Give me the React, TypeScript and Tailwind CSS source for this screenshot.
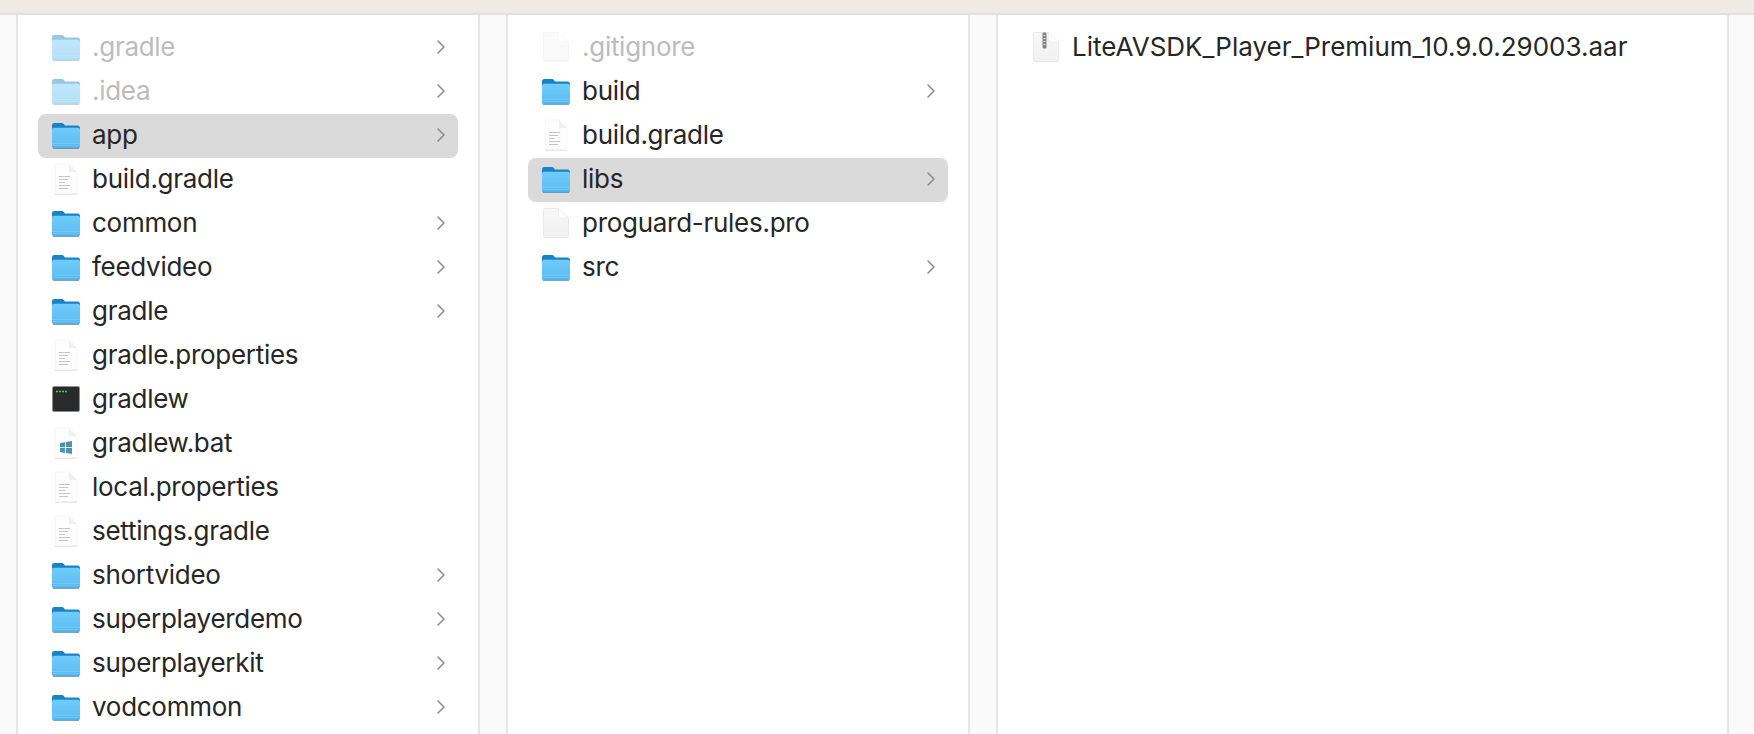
import { ChevronRight } from "lucide-react";

type Kind = "folder" | "doc" | "blank" | "term" | "bat" | "zip";
type Item = { name: string; kind: Kind; dim?: boolean; selected?: boolean };

const FolderIcon = () => (
  <svg width="30" height="28" viewBox="0 0 30 28" className="block">
    <defs>
      <linearGradient id="folderBody" x1="0" y1="0" x2="0" y2="1">
        <stop offset="0" stopColor="#6fcbf9" />
        <stop offset="0.75" stopColor="#60c0f5" />
        <stop offset="1" stopColor="#4fafe8" />
      </linearGradient>
    </defs>
    <path d="M1 4.5C1 2.8 2 2 3.4 2h7.2c1.1 0 1.7.5 2.4 1.3L14 4.6h12.6C28 4.6 29 5.5 29 7v4H1z" fill="#1a83c8" />
    <path d="M1 8.800c0-1.200.9-2 2-2h24c1.100 0 2 .8 2 2v16.400c0 1.300-.9 2.100-2.100 2.100H3.100c-1.200 0-2.100-.8-2.100-2.100z" fill="url(#folderBody)" />
    <path d="M1 22.400h28M1 24.600h28" stroke="#8fd5f8" strokeWidth="0.6" opacity="0.8" />
    <path d="M2 27.500h26" stroke="#2f6f99" strokeWidth="0.8" opacity="0.7" />
  </svg>
);

// plain white page used by the text and script documents
const DocSheet = ({ children }: { children?: React.ReactNode }) => (
  <svg width="30" height="32" viewBox="0 0 30 32" className="block">
    <path d="M4.500 1H18l8 8v22H4.500z" fill="#fefefe" stroke="#f3f3f3" strokeWidth="0.7" />
    <path d="M18 1v7c0 .6.4 1 1 1h7z" fill="#f0f0f0" />
    <path d="M4 31.200h22" stroke="#dcdcdc" strokeWidth="0.8" />
    {children}
  </svg>
);

// greyer page with a soft edge, for files with no preview
const GreySheet = ({ children }: { children?: React.ReactNode }) => (
  <svg width="30" height="32" viewBox="0 0 30 32" className="block">
    <defs>
      <linearGradient id="greySheet" x1="0" y1="0" x2="0" y2="1">
        <stop offset="0" stopColor="#f7f7f7" />
        <stop offset="1" stopColor="#f1f1f1" />
      </linearGradient>
    </defs>
    <path d="M2.500 3C2.500 2 3.300 1.500 4 1.500h13.500l10 9.500v18c0 1-.7 1.500-1.500 1.500H4c-.8 0-1.500-.5-1.500-1.500z" fill="url(#greySheet)" stroke="#e2e2e2" strokeWidth="0.7" />
    <path d="M17.500 1.500v8c0 .9.600 1.500 1.500 1.500h8.500z" fill="#ffffff" stroke="#e6e6e6" strokeWidth="0.5" />
    {children}
  </svg>
);

const FileIcon = ({ kind }: { kind: Kind }) => {
  if (kind === "folder") return <FolderIcon />;
  if (kind === "doc")
    return (
      <DocSheet>
        <path d="M8 13.500h11M8 16.500h9M8 19.500h6M8 22.500h11M8 25.500h9" stroke="#c4c4c4" strokeWidth="1.100" />
      </DocSheet>
    );
  if (kind === "bat")
    return (
      <DocSheet>
        <path d="M9 17l5-.8v5l-5-.1zM15 16l6-1v6.200l-6-.1zM9 21.800l5 .1v5l-5-.8zM15 22l6 .1v6l-6-1z" fill="#4b93b5" transform="translate(0 -1)" />
      </DocSheet>
    );
  if (kind === "zip")
    return (
      <GreySheet>
        <rect x="11.500" y="1.500" width="4" height="16" rx="1" fill="#858585" />
        <path d="M12.500 4.500h2M12.500 7.500h2M12.500 10.500h2M12.500 13.500h2" stroke="#e8e8e8" strokeWidth="0.9" />
      </GreySheet>
    );
  if (kind === "term")
    return (
      <svg width="30" height="28" viewBox="0 0 30 28" className="block">
        <rect x="1.500" y="1.500" width="27" height="25" rx="1.500" fill="#2a2a2a" stroke="#8a9297" strokeWidth="1" />
        <path d="M5 6.500h2M8 6.500h2M11 6.500h2M14 6.500h2" stroke="#4fc463" strokeWidth="1.600" />
      </svg>
    );
  return <GreySheet />;
};

const Row = ({ item }: { item: Item }) => (
  <div
    className={`flex h-11 items-center rounded-lg pb-[2px] pl-[13px] pr-[5px] ${item.selected ? "bg-[#dadada]" : ""}`}
  >
    <span className={`flex w-[30px] shrink-0 items-center justify-center ${item.dim ? "opacity-45" : ""}`}>
      <FileIcon kind={item.kind} />
    </span>
    <span
      className={`ml-[11px] flex-1 whitespace-nowrap text-[26px] leading-none ${item.kind === "zip" ? "" : "tracking-[-0.28px]"} ${item.dim ? "text-[#bcbcbc]" : "text-[#262626]"}`}
    >
      {item.name}
    </span>
    {item.kind === "folder" && (
      <ChevronRight className="h-6 w-6 text-[#8a8a8a]" strokeWidth={1.5} />
    )}
  </div>
);

const Column = ({ items, className }: { items: Item[]; className: string }) => (
  <div className={`border-r-2 border-[#e6e6e6] bg-white px-5 pt-[11px] ${className}`}>
    {items.map((item) => (
      <Row key={item.name} item={item} />
    ))}
  </div>
);

const first: Item[] = [
  { name: ".gradle", kind: "folder", dim: true },
  { name: ".idea", kind: "folder", dim: true },
  { name: "app", kind: "folder", selected: true },
  { name: "build.gradle", kind: "doc" },
  { name: "common", kind: "folder" },
  { name: "feedvideo", kind: "folder" },
  { name: "gradle", kind: "folder" },
  { name: "gradle.properties", kind: "doc" },
  { name: "gradlew", kind: "term" },
  { name: "gradlew.bat", kind: "bat" },
  { name: "local.properties", kind: "doc" },
  { name: "settings.gradle", kind: "doc" },
  { name: "shortvideo", kind: "folder" },
  { name: "superplayerdemo", kind: "folder" },
  { name: "superplayerkit", kind: "folder" },
  { name: "vodcommon", kind: "folder" },
];

const second: Item[] = [
  { name: ".gitignore", kind: "blank", dim: true },
  { name: "build", kind: "folder" },
  { name: "build.gradle", kind: "doc" },
  { name: "libs", kind: "folder", selected: true },
  { name: "proguard-rules.pro", kind: "blank" },
  { name: "src", kind: "folder" },
];

const third: Item[] = [{ name: "LiteAVSDK_Player_Premium_10.9.0.29003.aar", kind: "zip" }];

export default function App() {
  return (
    <div className="flex h-[734px] flex-col overflow-hidden bg-[#fafafa] font-['Inter',sans-serif]">
      <div className="h-[15px] shrink-0 border-b-2 border-[#e3dfdc] bg-[#efeae6]" />
      <div className="flex min-h-0 flex-1 items-stretch">
        <div className="w-[18px] shrink-0 border-r-2 border-[#e6e6e6]" />
        <Column items={first} className="w-[462px] shrink-0" />
        <div className="w-[28px] shrink-0 border-r-2 border-[#e6e6e6]" />
        <Column items={second} className="w-[462px] shrink-0" />
        <div className="w-[28px] shrink-0 border-r-2 border-[#e6e6e6]" />
        <Column items={third} className="w-[731px] shrink-0" />
      </div>
    </div>
  );
}
